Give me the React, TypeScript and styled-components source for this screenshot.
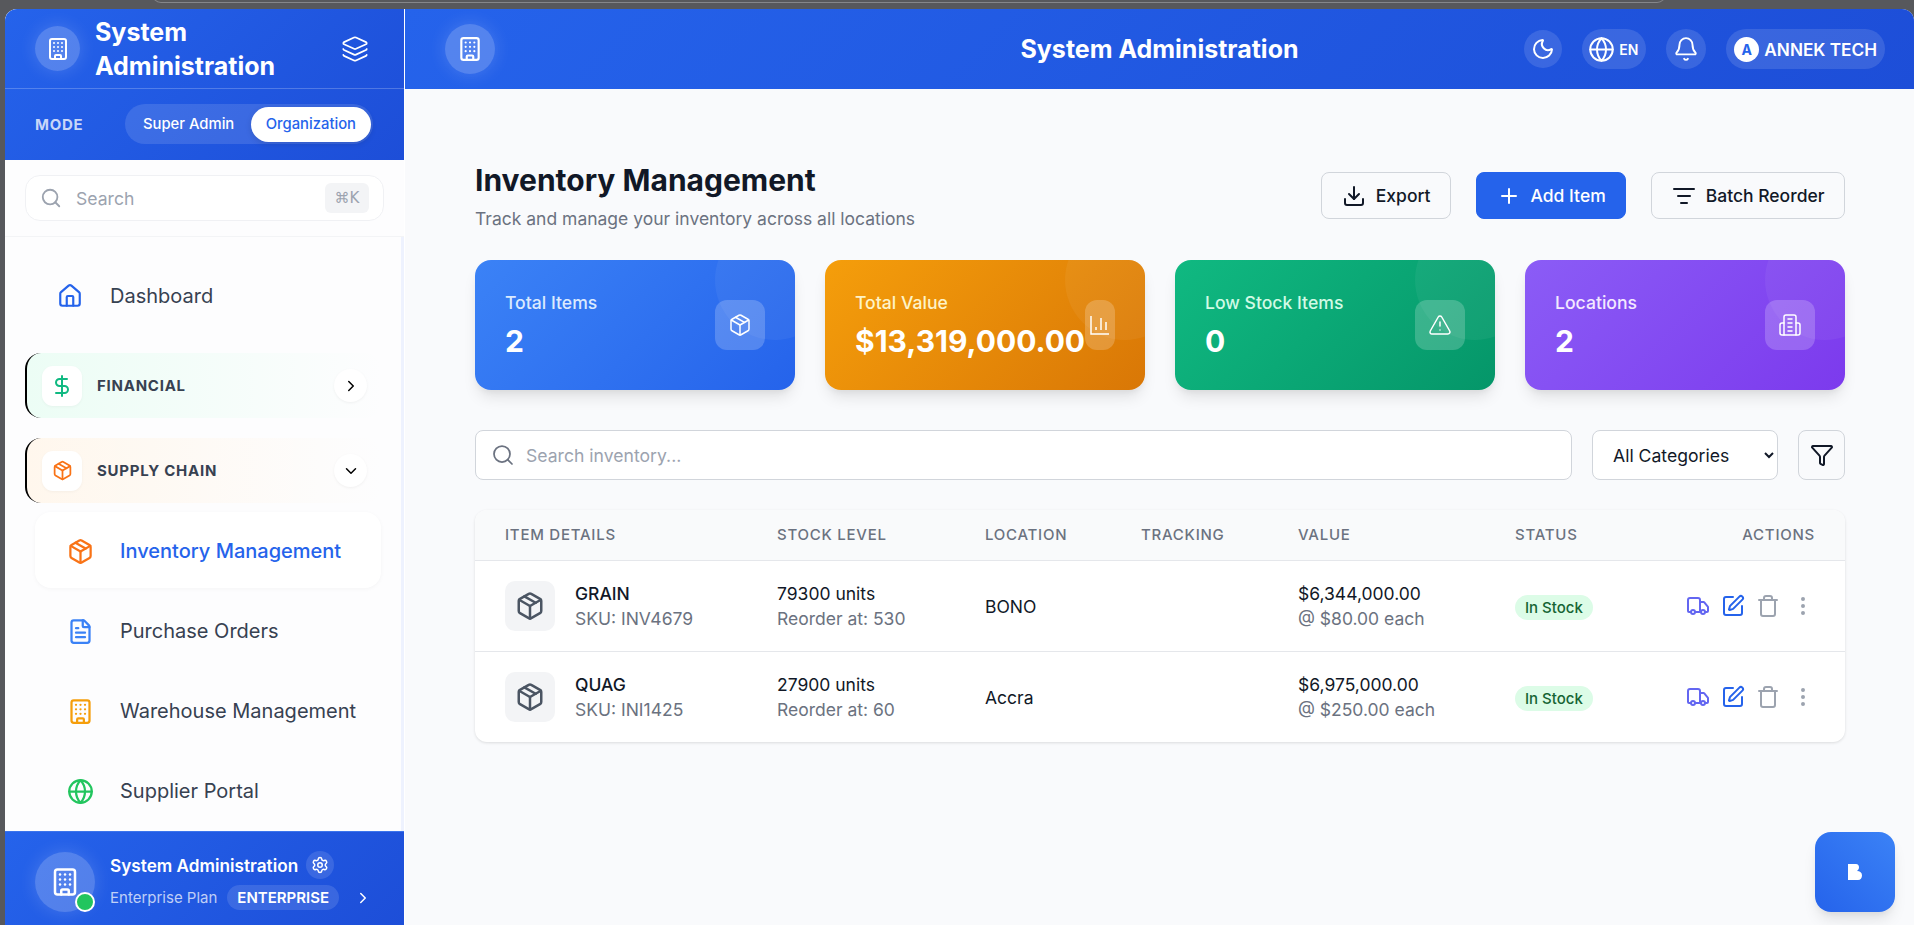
import React from "react";
import styled, { createGlobalStyle } from "styled-components";
import {
  Bell, Building, ChevronDown, ChevronRight, DollarSign, Download, EllipsisVertical,
  FileText, Filter, Globe, House, Layers, ListFilter, Moon, Package, Plus, Search, Settings,
  SquarePen, Trash, TriangleAlert, Truck,
} from "lucide-react";

const Global = createGlobalStyle`
  * { box-sizing: border-box; }
  html, body { margin: 0; padding: 0; }
  body { font-family: Inter, "Liberation Sans", sans-serif; background: #57585c; overflow: hidden; }
`;

const Frame = styled.div`
  position: relative;
  width: 1914px;
  height: 925px;
  padding: 9px 0 0 5px;
  background: #57585c;
  overflow: hidden;
`;
const TabEdge = styled.div`
  position: absolute;
  top: -6px;
  left: 152px;
  width: 1514px;
  height: 9px;
  border: 1px solid #85868a;
  border-radius: 0 0 10px 10px;
`;
const Shell = styled.div`
  display: flex;
  height: 916px;
  border-radius: 12px 12px 0 0;
  overflow: hidden;
  background: #f9fafc;
`;

/* Sidebar */
const Sidebar = styled.aside`
  flex: 0 0 400px;
  width: 400px;
  min-width: 0;
  display: flex;
  flex-direction: column;
  background: #fff;
  border-right: 1px solid #fff;
`;
const SideTop = styled.div`
  background: linear-gradient(135deg, #2563eb, #1d4ed8);
  color: #fff;
`;
const SideHead = styled.div`
  height: 80px;
  padding: 0 35px 0 30px;
  display: flex;
  align-items: center;
  justify-content: space-between;
  border-bottom: 1px solid rgba(255, 255, 255, 0.22);
`;
const Brand = styled.div`
  display: flex;
  align-items: center;
  gap: 15px;
`;
const Halo = styled.div<{ $size: number }>`
  position: relative;
  flex: none;
  width: ${(p) => p.$size}px;
  height: ${(p) => p.$size}px;
  border-radius: 50%;
  background: rgba(255, 255, 255, 0.22);
  box-shadow: 0 0 18px rgba(255, 255, 255, 0.16);
  display: flex;
  align-items: center;
  justify-content: center;
  color: #fff;
`;
const BrandTitle = styled.div`
  font-size: 25px;
  line-height: 34px;
  font-weight: 700;
  width: 200px;
`;
const ModeRow = styled.div`
  height: 71px;
  padding: 0 31px 1px 30px;
  display: flex;
  align-items: center;
  justify-content: space-between;
`;
const ModeLabel = styled.span`
  font-size: 15px;
  font-weight: 700;
  letter-spacing: 0.05em;
  color: rgba(255, 255, 255, 0.75);
`;
const ModeSwitch = styled.div`
  width: 248px;
  height: 40px;
  padding: 3px 2px 3px 3px;
  display: flex;
  align-items: center;
  justify-content: space-between;
  border-radius: 20px;
  background: rgba(255, 255, 255, 0.12);
`;
const ModeOption = styled.div<{ $active?: boolean }>`
  height: 35px;
  flex: none;
  padding: 0 15px;
  display: flex;
  align-items: center;
  border-radius: 18px;
  font-size: 14.8px;
  font-weight: 500;
  white-space: nowrap;
  background: ${(p) => (p.$active ? "#fff" : "transparent")};
  color: ${(p) => (p.$active ? "#2563eb" : "#fff")};
  box-shadow: ${(p) => (p.$active ? "0 2px 6px rgba(0,0,0,.12)" : "none")};
`;
const SearchWrap = styled.div`
  height: 77px;
  padding: 15px 20px;
  border-bottom: 1px solid #f3f4f6;
  background: #fdfdfe;
`;
const SideSearch = styled.div`
  height: 46px;
  padding: 0 14px 0 14px;
  display: flex;
  align-items: center;
  background: #fff;
  border: 1px solid #f0f1f4;
  border-radius: 15px;
  color: #9ca3af;
  font-size: 17.6px;
`;
const SideSearchText = styled.span`
  margin-left: 14px;
  flex: 1;
`;
const Kbd = styled.span`
  width: 44px;
  height: 30px;
  display: flex;
  align-items: center;
  justify-content: center;
  border-radius: 6px;
  background: #f3f4f6;
  color: #9ca3af;
  font-size: 15px;
  font-family: "DejaVu Sans", Inter, sans-serif;
`;
const Nav = styled.nav`
  position: relative;
  flex: 1;
  min-height: 0;
  overflow: hidden;
  padding: 20px 20px 0;
  background: #fdfdfe;
  border-right: 3px solid #eef2fe;
`;
const Thumb = styled.div`
  position: absolute;
  top: 0;
  right: -3px;
  width: 3px;
  height: 99px;
  background: #6366f1;
`;
const DashItem = styled.div`
  height: 76px;
  padding: 2px 0 0 32px;
  display: flex;
  align-items: center;
  gap: 27px;
  font-size: 20px;
  color: #374151;
`;
const Group = styled.div<{ $tint: string }>`
  height: 65px;
  margin-top: 20px;
  padding: 0 14px 0 15px;
  display: flex;
  align-items: center;
  border-left: 2px solid #000;
  border-radius: 16px;
  background: linear-gradient(90deg, ${(p) => p.$tint}, rgba(255, 255, 255, 0));
`;
const GroupIcon = styled.div<{ $color: string }>`
  width: 40px;
  height: 40px;
  border-radius: 11px;
  background: #fff;
  color: ${(p) => p.$color};
  box-shadow: 0 1px 3px rgba(0, 0, 0, 0.04);
  display: flex;
  align-items: center;
  justify-content: center;
`;
const GroupLabel = styled.span`
  margin-left: 15px;
  flex: 1;
  font-size: 15px;
  font-weight: 700;
  letter-spacing: 0.05em;
  color: #374151;
`;
const GroupChevron = styled.div`
  width: 33px;
  height: 33px;
  border-radius: 50%;
  background: #fff;
  color: #000;
  box-shadow: 0 1px 3px rgba(0, 0, 0, 0.05);
  display: flex;
  align-items: center;
  justify-content: center;
`;
const SubList = styled.div`
  margin: 9px 0 0 10px;
  width: 346px;
  display: flex;
  flex-direction: column;
  gap: 4px;
`;
const SubItem = styled.div<{ $active?: boolean }>`
  height: 76px;
  padding: 2px 0 0 32px;
  display: flex;
  align-items: center;
  gap: 26px;
  border-radius: 16px;
  font-size: 20px;
  font-weight: ${(p) => (p.$active ? 500 : 400)};
  background: ${(p) => (p.$active ? "#fff" : "transparent")};
  color: ${(p) => (p.$active ? "#2563eb" : "#374151")};
  box-shadow: ${(p) => (p.$active ? "0 1px 4px rgba(0,0,0,.04)" : "none")};
`;
const SideFoot = styled.div`
  height: 94px;
  flex: none;
  padding: 6px 30px 0;
  display: flex;
  align-items: center;
  gap: 15px;
  color: #fff;
  background: linear-gradient(135deg, #2563eb, #1d4ed8);
  border-top: 1px solid #3b74ec;
`;
const StatusDot = styled.span`
  position: absolute;
  right: 0;
  bottom: 0;
  width: 20px;
  height: 20px;
  border-radius: 50%;
  background: #22c55e;
  border: 2px solid #fff;
`;
const FootText = styled.div`
  flex: 1;
  min-width: 0;
  margin-top: -2px;
  display: flex;
  flex-direction: column;
  gap: 6px;
`;
const FootRow = styled.div`
  display: flex;
  align-items: center;
  gap: 8px;
  white-space: nowrap;
`;
const FootName = styled.span`
  font-size: 17.2px;
  font-weight: 600;
`;
const GearBubble = styled.span`
  width: 28px;
  height: 28px;
  border-radius: 50%;
  background: rgba(255, 255, 255, 0.12);
  display: flex;
  align-items: center;
  justify-content: center;
`;
const PlanText = styled.span`
  font-size: 15px;
  color: rgba(255, 255, 255, 0.72);
`;
const PlanBadge = styled.span`
  margin-left: 2px;
  height: 25px;
  padding: 0 10px;
  display: flex;
  align-items: center;
  border-radius: 13px;
  background: rgba(255, 255, 255, 0.12);
  font-size: 15px;
  font-weight: 600;
`;
const FootChevron = styled.span`
  margin-left: 7px;
  display: flex;
  flex: none;
`;

/* Main */
const Main = styled.main`
  flex: 1;
  min-width: 0;
  display: flex;
  flex-direction: column;
`;
const TopBar = styled.header`
  height: 80px;
  flex: none;
  padding: 0 29px 0 40px;
  display: flex;
  align-items: center;
  justify-content: space-between;
  position: relative;
  color: #fff;
  background: linear-gradient(135deg, #2563eb, #1d4ed8);
`;
const TopTitle = styled.div`
  position: absolute;
  left: 0;
  right: 0;
  text-align: center;
  font-size: 25px;
  font-weight: 700;
  pointer-events: none;
`;
const TopActions = styled.div`
  display: flex;
  align-items: center;
  gap: 20px;
`;
const RoundBtn = styled.div<{ $size: number }>`
  width: ${(p) => p.$size}px;
  height: ${(p) => p.$size}px;
  border-radius: 50%;
  background: rgba(255, 255, 255, 0.12);
  display: flex;
  align-items: center;
  justify-content: center;
`;
const PillBtn = styled.div<{ $left: number; $gap: number }>`
  height: 40px;
  padding: 0 8px 0 ${(p) => p.$left}px;
  display: flex;
  align-items: center;
  gap: ${(p) => p.$gap}px;
  border-radius: 20px;
  background: rgba(255, 255, 255, 0.12);
`;
const LangText = styled.span`
  font-size: 14px;
  font-weight: 600;
`;
const UserAvatar = styled.span`
  width: 25px;
  height: 25px;
  border-radius: 50%;
  background: #fff;
  color: #2563eb;
  display: flex;
  align-items: center;
  justify-content: center;
  font-size: 14px;
  font-weight: 700;
`;
const UserName = styled.span`
  font-size: 17.2px;
  font-weight: 600;
`;
const Content = styled.div`
  flex: 1;
  padding: 73px 69px 0 70px;
`;
const PageHead = styled.div`
  height: 68px;
  display: flex;
  align-items: center;
  justify-content: space-between;
`;
const PageTitle = styled.h1`
  margin: 0 0 9px;
  font-size: 30px;
  line-height: 36px;
  font-weight: 700;
  color: #111827;
`;
const PageSub = styled.p`
  margin: 0;
  font-size: 17.5px;
  line-height: 24px;
  color: #6b7280;
`;
const HeadActions = styled.div`
  display: flex;
  gap: 25px;
  margin-bottom: 1px;
`;
const Button = styled.button<{ $primary?: boolean }>`
  height: 47px;
  padding: 0 19.5px;
  display: flex;
  align-items: center;
  gap: 10px;
  border-radius: 8px;
  font: 500 17.5px Inter, sans-serif;
  color: ${(p) => (p.$primary ? "#fff" : "#111827")};
  background: ${(p) => (p.$primary ? "#2563eb" : "transparent")};
  border: 1px solid ${(p) => (p.$primary ? "#2563eb" : "#d1d5db")};
`;
const Stats = styled.div`
  margin-top: 30px;
  display: grid;
  grid-template-columns: repeat(4, 320px);
  gap: 30px;
`;
const Stat = styled.div<{ $from: string; $to: string }>`
  position: relative;
  height: 130px;
  padding: 0 30px;
  display: flex;
  align-items: center;
  justify-content: space-between;
  overflow: hidden;
  border-radius: 16px;
  color: #fff;
  background: linear-gradient(135deg, ${(p) => p.$from}, ${(p) => p.$to});
  box-shadow: 0 10px 15px -3px rgba(0, 0, 0, 0.1), 0 4px 6px -2px rgba(0, 0, 0, 0.05);
  &::before {
    content: "";
    position: absolute;
    top: -40px;
    right: -40px;
    width: 120px;
    height: 120px;
    border-radius: 50%;
    background: rgba(255, 255, 255, 0.05);
  }
`;
const StatText = styled.div`
  position: relative;
  white-space: nowrap;
`;
const StatLabel = styled.div<{ $color: string }>`
  font-size: 17.6px;
  line-height: 24px;
  font-weight: 500;
  color: ${(p) => p.$color};
  margin-bottom: 8px;
`;
const StatValue = styled.div`
  font-size: 30px;
  line-height: 36px;
  font-weight: 700;
`;
const StatIcon = styled.div`
  position: relative;
  width: 50px;
  height: 50px;
  border-radius: 12px;
  background: rgba(255, 255, 255, 0.2);
  display: flex;
  align-items: center;
  justify-content: center;
  svg { flex: none; }
`;
const Tools = styled.div`
  margin-top: 40px;
  display: flex;
  gap: 20px;
`;
const SearchField = styled.div`
  flex: 1;
  height: 50px;
  padding: 0 15px;
  display: flex;
  align-items: center;
  gap: 9px;
  background: #fff;
  border: 1px solid #d1d5db;
  border-radius: 8px;
  color: #6b7280;
`;
const SearchInput = styled.input`
  flex: 1;
  border: 0;
  outline: 0;
  background: transparent;
  font: 400 17.6px Inter, sans-serif;
  &::placeholder { color: #9ca3af; opacity: 1; }
`;
const Select = styled.select`
  width: 186px;
  height: 50px;
  padding: 0 2px 0 16px;
  background: #fff;
  border: 1px solid #d1d5db;
  border-radius: 8px;
  font: 400 17.6px Inter, sans-serif;
  color: #111827;
`;
const IconBtn = styled.div`
  width: 47px;
  height: 50px;
  display: flex;
  align-items: center;
  justify-content: center;
  border: 1px solid #d1d5db;
  border-radius: 8px;
  color: #111827;
`;
const TableCard = styled.div`
  margin-top: 30px;
  background: #fff;
  border-radius: 12px;
  box-shadow: 0 1px 3px rgba(0, 0, 0, 0.12);
  overflow: hidden;
`;
const Table = styled.table`
  width: 100%;
  table-layout: fixed;
  border-collapse: collapse;
`;
const Th = styled.th<{ $right?: boolean }>`
  height: 50px;
  padding: 0 30px;
  background: #f9fafb;
  border-bottom: 1px solid #e5e7eb;
  font-size: 15px;
  font-weight: 500;
  letter-spacing: 0.05em;
  text-transform: uppercase;
  color: #6b7280;
  text-align: ${(p) => (p.$right ? "right" : "left")};
`;
const Tr = styled.tr`
  & + & td { border-top: 1px solid #e5e7eb; }
`;
const Td = styled.td`
  height: 91px;
  padding: 0 30px;
  font-size: 17.5px;
  line-height: 25px;
  color: #111827;
`;
const ItemCell = styled.div`
  display: flex;
  align-items: center;
  gap: 20px;
`;
const ItemIcon = styled.div`
  width: 50px;
  height: 50px;
  flex: none;
  border-radius: 10px;
  background: #f3f4f6;
  color: #4b5563;
  display: flex;
  align-items: center;
  justify-content: center;
`;
const ItemName = styled.div`
  font-weight: 500;
`;
const Muted = styled.div`
  color: #6b7280;
  white-space: nowrap;
`;
const LocationText = styled.div`
  margin-top: 2px;
`;
const Badge = styled.span`
  display: inline-flex;
  align-items: center;
  height: 25px;
  margin-top: 3px;
  padding: 0 10px;
  border-radius: 13px;
  background: #dcfce7;
  color: #166534;
  font-size: 15px;
  font-weight: 500;
`;
const RowActions = styled.div`
  display: flex;
  justify-content: flex-end;
  align-items: center;
  gap: 11px;
`;
const Action = styled.span<{ $color: string }>`
  display: flex;
  color: ${(p) => p.$color};
`;
const Fab = styled.div`
  position: absolute;
  right: 19px;
  bottom: 13px;
  width: 80px;
  height: 80px;
  border-radius: 16px;
  display: flex;
  align-items: center;
  justify-content: center;
  background: linear-gradient(45deg, #2563eb, #3b82f6);
  box-shadow: 0 10px 15px -3px rgba(0, 0, 0, 0.1), 0 4px 6px -2px rgba(0, 0, 0, 0.05);
`;

const stats = [
  { label: "Total Items", value: "2", from: "#3b82f6", to: "#2563eb", tint: "#dbeafe", icon: <Package size={24} strokeWidth={1.5} /> },
  {
    label: "Total Value", value: "$13,319,000.00", from: "#f59e0b", to: "#d97706", tint: "#fef3c7",
    icon: (
      <svg width="24" height="24" viewBox="0 0 24 24" fill="none" stroke="currentColor" strokeWidth="1.5">
        <path d="M3 3v18h18M18 17V9M13 17V5M8 17v-3" />
      </svg>
    ),
  },
  { label: "Low Stock Items", value: "0", from: "#10b981", to: "#059669", tint: "#d1fae5", icon: <TriangleAlert size={24} strokeWidth={1.5} /> },
  {
    label: "Locations", value: "2", from: "#8b5cf6", to: "#7c3aed", tint: "#f3e8ff",
    icon: (
      <svg width="24" height="24" viewBox="0 0 24 24" fill="none" stroke="currentColor" strokeWidth="1.5" strokeLinecap="round" strokeLinejoin="round">
        <path d="M6 22V4a2 2 0 0 1 2-2h8a2 2 0 0 1 2 2v18Z" />
        <path d="M6 10H4a2 2 0 0 0-2 2v8a2 2 0 0 0 2 2h2" />
        <path d="M18 10h2a2 2 0 0 1 2 2v8a2 2 0 0 1-2 2h-2" />
        <path d="M10 6h4M10 10h4M10 14h4M10 18h4" />
      </svg>
    ),
  },
];

const rows = [
  { name: "GRAIN", sku: "SKU: INV4679", units: "79300 units", reorder: "Reorder at: 530", loc: "BONO", value: "$6,344,000.00", each: "@ $80.00 each" },
  { name: "QUAG", sku: "SKU: INI1425", units: "27900 units", reorder: "Reorder at: 60", loc: "Accra", value: "$6,975,000.00", each: "@ $250.00 each" },
];

const cols = [272, 208, 156, 157, 217, 167, 193];

export default function App() {
  return (
    <Frame>
      <Global />
      <TabEdge />
      <Shell>
        <Sidebar>
          <SideTop>
            <SideHead>
              <Brand>
                <Halo $size={45}><Building size={24} strokeWidth={2} /></Halo>
                <BrandTitle>System Administration</BrandTitle>
              </Brand>
              <Layers size={28} strokeWidth={1.5} />
            </SideHead>
            <ModeRow>
              <ModeLabel>MODE</ModeLabel>
              <ModeSwitch>
                <ModeOption>Super Admin</ModeOption>
                <ModeOption $active>Organization</ModeOption>
              </ModeSwitch>
            </ModeRow>
          </SideTop>
          <SearchWrap>
            <SideSearch>
              <Search size={22} strokeWidth={2} />
              <SideSearchText>Search</SideSearchText>
              <Kbd>⌘K</Kbd>
            </SideSearch>
          </SearchWrap>
          <Nav>
            <Thumb />
            <DashItem><House size={26} color="#2563eb" strokeWidth={2} />Dashboard</DashItem>
            <Group $tint="#ecfdf5">
              <GroupIcon $color="#10b981"><DollarSign size={24} strokeWidth={2} /></GroupIcon>
              <GroupLabel>FINANCIAL</GroupLabel>
              <GroupChevron><ChevronRight size={18} strokeWidth={2} /></GroupChevron>
            </Group>
            <Group $tint="#fff7ed">
              <GroupIcon $color="#f97316"><Package size={21} strokeWidth={2} /></GroupIcon>
              <GroupLabel>SUPPLY CHAIN</GroupLabel>
              <GroupChevron><ChevronDown size={18} strokeWidth={2} /></GroupChevron>
            </Group>
            <SubList>
              <SubItem $active><Package size={27} color="#f97316" strokeWidth={2} />Inventory Management</SubItem>
              <SubItem><FileText size={27} color="#3b82f6" strokeWidth={2} />Purchase Orders</SubItem>
              <SubItem><Building size={27} color="#f59e0b" strokeWidth={2} />Warehouse Management</SubItem>
              <SubItem><Globe size={27} color="#22c55e" strokeWidth={2} />Supplier Portal</SubItem>
            </SubList>
          </Nav>
          <SideFoot>
            <Halo $size={60}>
              <Building size={30} strokeWidth={2} />
              <StatusDot />
            </Halo>
            <FootText>
              <FootRow>
                <FootName>System Administration</FootName>
                <GearBubble><Settings size={18} strokeWidth={2} /></GearBubble>
              </FootRow>
              <FootRow>
                <PlanText>Enterprise Plan</PlanText>
                <PlanBadge>ENTERPRISE</PlanBadge>
                <FootChevron><ChevronRight size={18} strokeWidth={2} /></FootChevron>
              </FootRow>
            </FootText>
          </SideFoot>
        </Sidebar>
        <Main>
          <TopBar>
            <Halo $size={50}><Building size={26} strokeWidth={2} /></Halo>
            <TopTitle>System Administration</TopTitle>
            <TopActions>
              <RoundBtn $size={38}><Moon size={24} strokeWidth={2} /></RoundBtn>
              <PillBtn $left={6} $gap={4}><Globe size={27} strokeWidth={1.75} /><LangText>EN</LangText></PillBtn>
              <RoundBtn $size={40}><Bell size={26} strokeWidth={1.75} /></RoundBtn>
              <PillBtn $left={8} $gap={5}><UserAvatar>A</UserAvatar><UserName>ANNEK TECH</UserName></PillBtn>
            </TopActions>
          </TopBar>
          <Content>
            <PageHead>
              <div>
                <PageTitle>Inventory Management</PageTitle>
                <PageSub>Track and manage your inventory across all locations</PageSub>
              </div>
              <HeadActions>
                <Button><Download size={24} strokeWidth={2} />Export</Button>
                <Button $primary><Plus size={24} strokeWidth={2} />Add Item</Button>
                <Button><ListFilter size={24} strokeWidth={2} />Batch Reorder</Button>
              </HeadActions>
            </PageHead>
            <Stats>
              {stats.map((s) => (
                <Stat key={s.label} $from={s.from} $to={s.to}>
                  <StatText>
                    <StatLabel $color={s.tint}>{s.label}</StatLabel>
                    <StatValue>{s.value}</StatValue>
                  </StatText>
                  <StatIcon>{s.icon}</StatIcon>
                </Stat>
              ))}
            </Stats>
            <Tools>
              <SearchField>
                <Search size={24} strokeWidth={1.75} />
                <SearchInput placeholder="Search inventory..." readOnly />
              </SearchField>
              <Select defaultValue="all"><option value="all">All Categories</option></Select>
              <IconBtn><Filter size={24} strokeWidth={2} /></IconBtn>
            </Tools>
            <TableCard>
              <Table>
                <colgroup>{cols.map((w, i) => <col key={i} width={w} />)}</colgroup>
                <thead>
                  <tr>
                    <Th>Item Details</Th>
                    <Th>Stock Level</Th>
                    <Th>Location</Th>
                    <Th>Tracking</Th>
                    <Th>Value</Th>
                    <Th>Status</Th>
                    <Th $right>Actions</Th>
                  </tr>
                </thead>
                <tbody>
                  {rows.map((r) => (
                    <Tr key={r.name}>
                      <Td>
                        <ItemCell>
                          <ItemIcon><Package size={30} strokeWidth={2} /></ItemIcon>
                          <div>
                            <ItemName>{r.name}</ItemName>
                            <Muted>{r.sku}</Muted>
                          </div>
                        </ItemCell>
                      </Td>
                      <Td><div>{r.units}</div><Muted>{r.reorder}</Muted></Td>
                      <Td><LocationText>{r.loc}</LocationText></Td>
                      <Td />
                      <Td><div>{r.value}</div><Muted>{r.each}</Muted></Td>
                      <Td><Badge>In Stock</Badge></Td>
                      <Td>
                        <RowActions>
                          <Action $color="#6366f1"><Truck size={24} strokeWidth={2} /></Action>
                          <Action $color="#2563eb"><SquarePen size={24} strokeWidth={2} /></Action>
                          <Action $color="#9ca3af"><Trash size={24} strokeWidth={2} /></Action>
                          <Action $color="#9ca3af"><EllipsisVertical size={24} strokeWidth={2} /></Action>
                        </RowActions>
                      </Td>
                    </Tr>
                  ))}
                </tbody>
              </Table>
            </TableCard>
          </Content>
        </Main>
      </Shell>
      <Fab>
        <svg width="14" height="16" viewBox="0 0 14 16" fill="#fff" role="img" aria-label="logo">
          <path d="M0 0H8C10 0 11 1.5 11 3.5C11 5 10 6 9 7C12 7 14 8.5 14 11.5C14 14 12.5 16 10 16H0Z" />
        </svg>
      </Fab>
    </Frame>
  );
}
